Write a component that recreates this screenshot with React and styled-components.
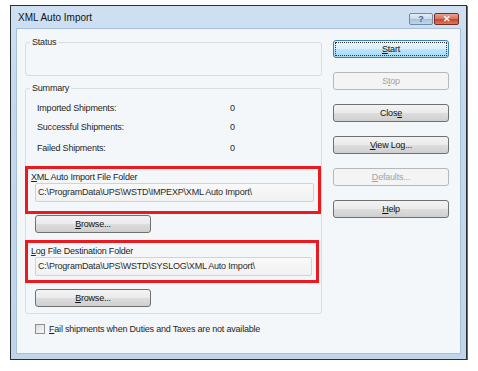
import React from 'react';
import styled, { createGlobalStyle, css } from 'styled-components';

const Global = createGlobalStyle`
  body {
    margin: 0;
    background: #fff;
    font-family: "Liberation Sans", Arial, sans-serif;
    font-size: 9px;
    letter-spacing: -0.2px;
    color: #1e1e1e;
  }
`

const Window = styled.div`
  margin: 5px 0 0 10px;
  width: 457px;
  height: 355px;
  box-sizing: border-box;
  border: 1px solid #2e2e2e;
  box-shadow: 1px 1px 0 #6a6a6a;
  background: linear-gradient(180deg, #cfe0f3 0%, #c3d7ee 30%, #c0d5ec 100%);
  display: flex;
  flex-direction: column;
  padding: 0 5px 5px 5px;
`

const TitleBar = styled.div`
  height: 22px;
  display: flex;
  align-items: center;
  justify-content: space-between;
`

const Title = styled.span`
  font-size: 10px;
  letter-spacing: 0;
  color: #111;
  padding-left: 2px;
  margin-top: 1px;
`

const Caps = styled.div`
  display: flex;
  margin-right: 2px;
  align-self: flex-start;
  margin-top: 7px;
`

const CapButton = styled.div`
  width: 24px;
  height: 12px;
  box-sizing: border-box;
  border: 1px solid #6f8aa6;
  border-radius: 2px;
  display: flex;
  align-items: center;
  justify-content: center;
  font-size: 9px;
  font-weight: bold;
  letter-spacing: 0;
  color: #4a6685;
  background: linear-gradient(180deg, #e4eef8 0%, #c8d9ea 50%, #a9c1da 51%, #c2d6ea 100%);
  ${p => p.$close && css`
    width: 25px;
    margin-left: 1px;
    border-color: #7a2a1e;
    color: #fff;
    background: linear-gradient(180deg, #e8a493 0%, #d66f58 50%, #c2452a 51%, #d9785c 100%);
  `}
`

const Client = styled.div`
  flex: 1;
  box-sizing: border-box;
  border: 1px solid #a9c0da;
  background: #f4f7fa;
  display: flex;
  padding: 10px 0 0 8px;
  gap: 11px;
`

const LeftCol = styled.div`
  width: 297px;
  display: flex;
  flex-direction: column;
`

const Group = styled.div`
  box-sizing: border-box;
  border: 1px solid #d6dde5;
  border-radius: 3px;
  height: ${p => p.$h}px;
  margin-top: ${p => p.$mt || 0}px;
  display: flex;
  flex-direction: column;
`

const GroupTitle = styled.div`
  align-self: flex-start;
  margin: -7px 0 0 4px;
  padding: 0 2px;
  line-height: 12px;
  background: #f4f7fa;
`

const StatRow = styled.div`
  display: flex;
  line-height: 12px;
  margin-top: ${p => p.$mt}px;
  padding-left: 11px;
`

const StatLabel = styled.span`
  width: 193px;
`

const Highlight = styled.div`
  box-sizing: border-box;
  border: 3px solid #ea1a1f;
  width: ${p => p.$w}px;
  margin: ${p => p.$mt}px 0 0 -1px;
  padding: 2px 4px ${p => p.$pb}px 3px;
  display: flex;
  flex-direction: column;
`

const FieldLabel = styled.div`
  line-height: 12px;
`

const PathField = styled.div`
  box-sizing: border-box;
  height: 19px;
  margin-left: 4px;
  border: 1px solid #cdd3d9;
  border-radius: 2px;
  background: linear-gradient(180deg, #f9f9f9 0%, #f1f1f1 100%);
  line-height: 17px;
  padding-left: 2px;
  color: #2a2a2a;
  white-space: nowrap;
`

const Button = styled.div`
  box-sizing: border-box;
  width: ${p => p.$w || 116}px;
  height: 18px;
  border: 1px solid #707070;
  border-radius: 3px;
  display: flex;
  align-items: center;
  justify-content: center;
  color: #111;
  background: linear-gradient(180deg, #f3f3f3 0%, #ebebeb 48%, #dddddd 52%, #cfcfcf 100%);
  margin-top: ${p => p.$mt || 0}px;
  margin-left: ${p => p.$ml || 0}px;
  ${p => p.$default && css`
    border-color: #3c7fb1;
    background: linear-gradient(180deg, #eaf6fd 0%, #d9f0fc 48%, #bee6fd 52%, #a7d9f5 100%);
    outline: 1px dotted #333;
    outline-offset: -3px;
  `}
  ${p => p.$disabled && css`
    border-color: #b3b8bc;
    background: #f4f4f4;
    color: #a3a3a3;
  `}
`

const CheckRow = styled.div`
  display: flex;
  align-items: center;
  margin: 10px 0 0 10px;
  gap: 4px;
`

const CheckBox = styled.div`
  width: 10px;
  height: 10px;
  box-sizing: border-box;
  border: 1px solid #8f8f8f;
  background: linear-gradient(135deg, #dcdcdc, #f8f8f8);
`

const RightCol = styled.div`
  display: flex;
  flex-direction: column;
  padding-top: 1px;
  gap: 14px;
`

const App = () => {
  const stats = [
    ['Imported Shipments:', 0, 8],
    ['Successful Shipments:', 0, 7],
    ['Failed Shipments:', 0, 9],
  ];
  return (
    <>
      <Global />
      <Window>
        <TitleBar>
          <Title>XML Auto Import</Title>
          <Caps>
            <CapButton>?</CapButton>
            <CapButton $close>✕</CapButton>
          </Caps>
        </TitleBar>
        <Client>
          <LeftCol>
            <Group $h={34} $mt={3}>
              <GroupTitle>Status</GroupTitle>
            </Group>
            <Group $h={226} $mt={12}>
              <GroupTitle>Summary</GroupTitle>
              {stats.map(([label, value, mt]) => (
                <StatRow key={label} $mt={mt}>
                  <StatLabel>{label}</StatLabel>
                  <span>{value}</span>
                </StatRow>
              ))}
              <Highlight $w={296} $mt={12} $pb={9}>
                <FieldLabel><u>X</u>ML Auto Import File Folder</FieldLabel>
                <PathField>C:\ProgramData\UPS\WSTD\IMPEXP\XML Auto Import\</PathField>
              </Highlight>
              <Button $mt={1} $ml={9}><span><u>B</u>rowse...</span></Button>
              <Highlight $w={294} $mt={7} $pb={4}>
                <FieldLabel><u>L</u>og File Destination Folder</FieldLabel>
                <PathField>C:\ProgramData\UPS\WSTD\SYSLOG\XML Auto Import\</PathField>
              </Highlight>
              <Button $mt={6} $ml={9}><span><u>B</u>rowse...</span></Button>
            </Group>
            <CheckRow>
              <CheckBox />
              <span><u>F</u>ail shipments when Duties and Taxes are not available</span>
            </CheckRow>
          </LeftCol>
          <RightCol>
            <Button $default><span><u>S</u>tart</span></Button>
            <Button $disabled><span>S<u>t</u>op</span></Button>
            <Button><span>Clos<u>e</u></span></Button>
            <Button><span><u>V</u>iew Log...</span></Button>
            <Button $disabled><span><u>D</u>efaults...</span></Button>
            <Button><span><u>H</u>elp</span></Button>
          </RightCol>
        </Client>
      </Window>
    </>
  );
};

export default App;
